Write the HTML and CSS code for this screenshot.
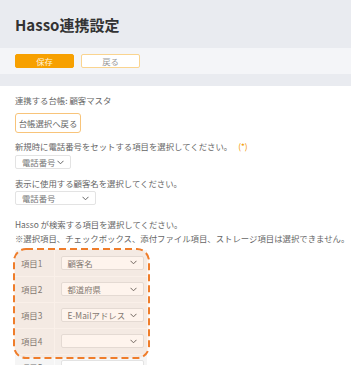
FILE: index.html
```html
<!DOCTYPE html>
<html>
<head>
	<title>Hasso連携設定</title>
	<meta charset="utf-8"/>
	<link rel="stylesheet" href="styles.css">
</head>
<body>

<div id="header">
	<h1>Hasso連携設定</h1>
</div>
<div id="toolbar">
	<button class="btn save">保存</button>
	<button class="btn back">戻る</button>
</div>

<div id="content">
	<p class="line">連携する台帳: 顧客マスタ</p>
	<button class="btn-ledger">台帳選択へ戻る</button>

	<p class="line">新規時に電話番号をセットする項目を選択してください。 <span class="req">(*)</span></p>
	<div class="select sel-phone">
		<span>電話番号</span>
		<svg class="chev" width="7" height="5" viewBox="0 0 7 5"><path d="M0.5 0.8 L3.5 3.8 L6.5 0.8" fill="none" stroke="#666" stroke-width="1"/></svg>
	</div>

	<p class="line">表示に使用する顧客名を選択してください。</p>
	<div class="select sel-name">
		<span>電話番号</span>
		<svg class="chev" width="7" height="5" viewBox="0 0 7 5"><path d="M0.5 0.8 L3.5 3.8 L6.5 0.8" fill="none" stroke="#666" stroke-width="1"/></svg>
	</div>

	<p class="note">Hasso が検索する項目を選択してください。<br>※選択項目、チェックボックス、添付ファイル項目、ストレージ項目は選択できません。</p>

	<div class="fields">
		<table>
			<tr>
				<th>項目1</th>
				<td><div class="select"><span>顧客名</span><svg class="chev" width="7" height="5" viewBox="0 0 7 5"><path d="M0.5 0.8 L3.5 3.8 L6.5 0.8" fill="none" stroke="#666" stroke-width="1"/></svg></div></td>
			</tr>
			<tr>
				<th>項目2</th>
				<td><div class="select"><span>都道府県</span><svg class="chev" width="7" height="5" viewBox="0 0 7 5"><path d="M0.5 0.8 L3.5 3.8 L6.5 0.8" fill="none" stroke="#666" stroke-width="1"/></svg></div></td>
			</tr>
			<tr>
				<th>項目3</th>
				<td><div class="select"><span>E-Mailアドレス</span><svg class="chev" width="7" height="5" viewBox="0 0 7 5"><path d="M0.5 0.8 L3.5 3.8 L6.5 0.8" fill="none" stroke="#666" stroke-width="1"/></svg></div></td>
			</tr>
			<tr>
				<th>項目4</th>
				<td><div class="select"><span></span><svg class="chev" width="7" height="5" viewBox="0 0 7 5"><path d="M0.5 0.8 L3.5 3.8 L6.5 0.8" fill="none" stroke="#666" stroke-width="1"/></svg></div></td>
			</tr>
			<tr>
				<th>項目5</th>
				<td><div class="select"><span></span><svg class="chev" width="7" height="5" viewBox="0 0 7 5"><path d="M0.5 0.8 L3.5 3.8 L6.5 0.8" fill="none" stroke="#666" stroke-width="1"/></svg></div></td>
			</tr>
		</table>
		<!-- highlight drawn over the first four rows -->
		<svg class="highlight" width="137" height="111" viewBox="0 0 137 111">
			<rect x="1" y="1" width="135" height="109" rx="12" ry="12" fill="rgba(240,130,50,0.09)" stroke="#ef7d2b" stroke-width="2" stroke-dasharray="7 4"/>
		</svg>
	</div>
</div>

</body>
</html>
```

FILE: styles.css
```css
* {
	box-sizing: border-box;
}

body {
	margin: 0;
	background: #ffffff;
	color: #666666;
	font-family: "Noto Sans CJK JP", "Noto Sans", sans-serif;
	font-size: 8.4px;
	overflow: hidden;
}

#header {
	height: 48px;
	background: #e9ebf0;
	display: flex;
	align-items: center;
	padding: 0 15px;
}

#header h1 {
	margin: 0;
	font-size: 15px;
	font-weight: bold;
	color: #333333;
}

#toolbar {
	height: 26px;
	background: #f4f5f8;
	display: flex;
	align-items: center;
	gap: 7px;
	padding: 0 15px;
	border-bottom: 12px solid #e9ebf0;
	box-sizing: content-box;
}

.btn {
	width: 59px;
	height: 14px;
	padding: 0;
	border-radius: 2px;
	font-family: inherit;
	font-size: 8.4px;
	line-height: 12px;
}

.save {
	background: #f7a000;
	border: 1px solid #f7a000;
	color: #fff3dc;
}

.back {
	background: #ffffff;
	border: 1px solid #fad48f;
	color: #999999;
}

#content {
	padding: 6px 15px 0;
}

.line {
	margin: 0;
	line-height: 16px;
}

.req {
	color: #f39800;
	margin-left: 4px;
}

.btn-ledger {
	display: block;
	margin: 5px 0 5px;
	width: 66px;
	height: 20px;
	padding: 0;
	background: #ffffff;
	border: 1px solid #f8c47a;
	border-radius: 3px;
	font-family: inherit;
	font-size: 8.4px;
	color: #666666;
}

.select {
	display: flex;
	align-items: center;
	justify-content: space-between;
	height: 14px;
	padding: 0 6px 0 6px;
	background: #ffffff;
	border: 1px solid #e3e3e3;
	border-radius: 2px;
	font-size: 8.4px;
	color: #777777;
	white-space: nowrap;
}

.chev {
	flex: none;
}

.sel-phone {
	width: 56px;
	margin: 1px 0 6px;
}

.sel-name {
	width: 81px;
	margin: 0 0 12px;
}

.note {
	margin: 0;
	line-height: 14px;
	white-space: nowrap;
}

.fields {
	position: relative;
	margin-top: 5px;
	width: 132px;
}

table {
	border-collapse: collapse;
	width: 132px;
}

th, td {
	background: #f5f5f5;
	height: 26px;
	padding: 0;
	border-bottom: 1px solid #fbfbfb;
}

th {
	width: 39px;
	text-align: left;
	font-weight: normal;
	padding-left: 6px;
	border-right: 1px solid #fbfbfb;
	color: #777777;
}

td {
	padding: 0 3px 0 6px;
}

.highlight {
	position: absolute;
	left: -2px;
	top: -2px;
	pointer-events: none;
}
```
